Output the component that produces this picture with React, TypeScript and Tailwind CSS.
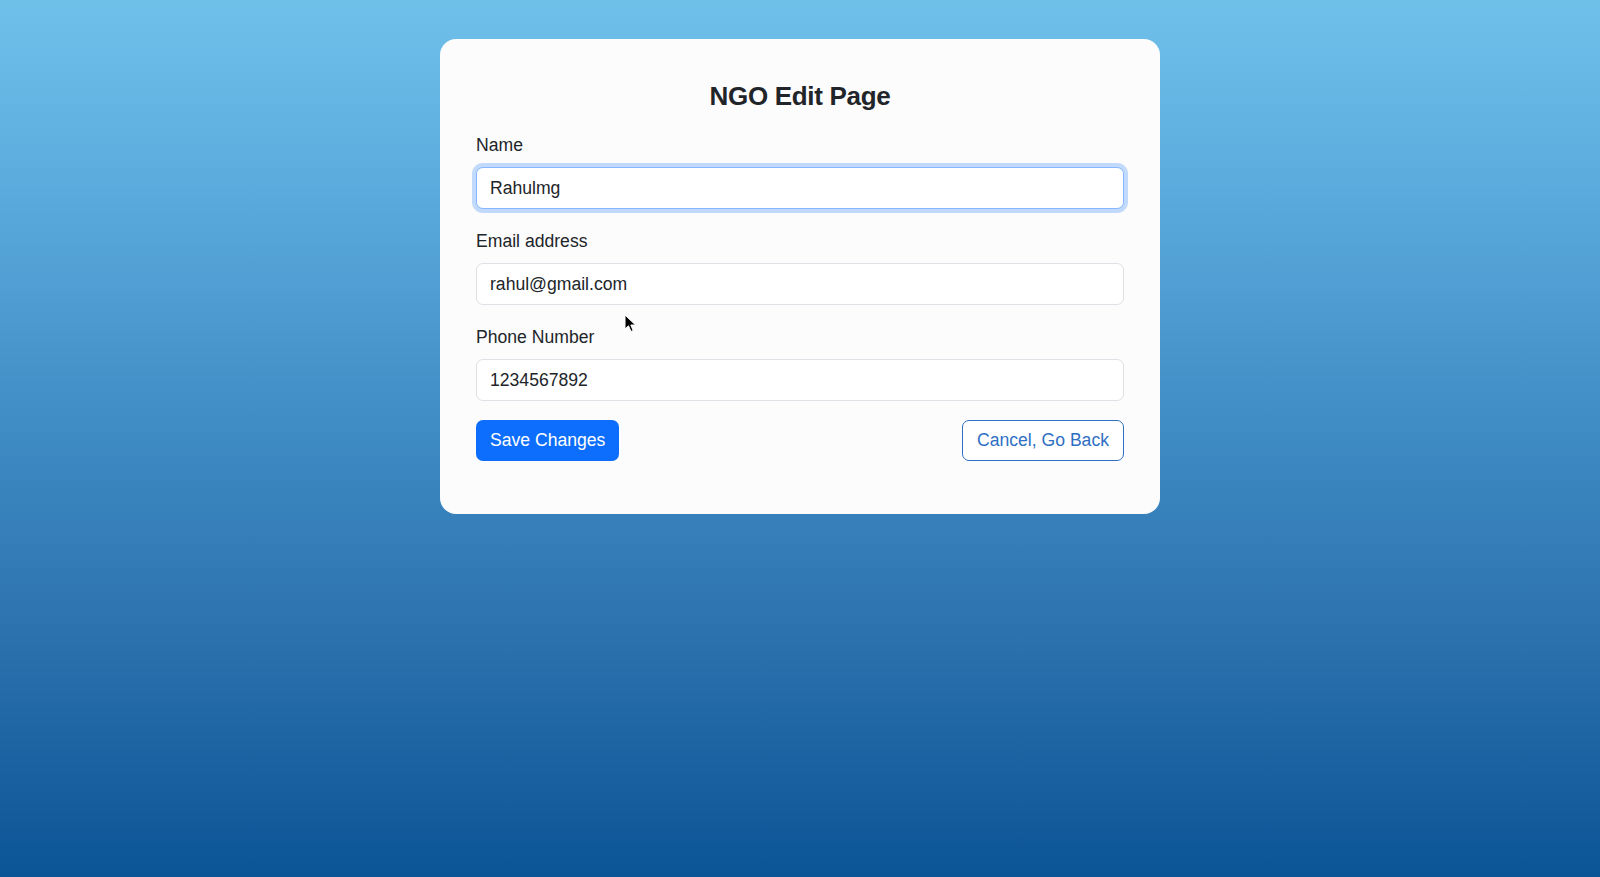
const font = { fontFamily: '"Liberation Sans", Arial, sans-serif' };

function Field({
  label,
  value,
  focused,
}: {
  label: string;
  value: string;
  focused?: boolean;
}) {
  return (
    <div className="flex flex-col mb-[19px]">
      <label className="text-[17.6px] leading-[26px] text-[#212529] mb-[9px]">
        {label}
      </label>
      <input
        readOnly
        value={value}
        className={
          focused
            ? "h-[42px] px-[13px] rounded-[7px] bg-white text-[17.6px] text-[#212529] border border-[#86b7fe] shadow-[0_0_0_4px_rgba(13,110,253,0.25)] outline-none"
            : "h-[42px] px-[13px] rounded-[7px] bg-white text-[17.6px] text-[#212529] border border-[#dee2e6] outline-none"
        }
        style={font}
      />
    </div>
  );
}

export default function App() {
  return (
    <div
      className="relative min-h-[877px] w-full flex justify-center items-start pt-[39px] bg-[linear-gradient(to_bottom,#6fc1ea_0%,#5aa9dc_23%,#3f8bc4_49%,#2a70ad_74%,#0b5495_100%)]"
      style={font}
    >
      <div className="w-[720px] bg-[#fcfcfd] rounded-[16px] px-[36px] pt-[41px] pb-[53px]">
        <h3 className="text-[26px] leading-[32px] font-bold text-center text-[#212529] tracking-[-0.3px] mb-[20px]">
          NGO Edit Page
        </h3>
        <Field label="Name" value="Rahulmg" focused />
        <Field label="Email address" value="rahul@gmail.com" />
        <Field label="Phone Number" value="1234567892" />
        <div className="flex justify-between items-center mt-px">
          <button className="h-[41px] px-[14px] rounded-[7px] bg-[#0d6efd] text-white text-[17.6px]">
            Save Changes
          </button>
          <button className="h-[41px] px-[14px] rounded-[7px] border border-[#2f6fc4] text-[#2f6fc4] text-[17.6px] bg-white">
            Cancel, Go Back
          </button>
        </div>
      </div>
      <svg
        className="absolute left-[624px] top-[314px]"
        width="13"
        height="19"
        viewBox="0 0 13 19"
      >
        <path
          d="M1 1 L1 15 L4.5 11.8 L7 17.5 L9.2 16.5 L6.8 11 L11.5 11 Z"
          fill="#000"
          stroke="#fff"
          strokeWidth="1"
        />
      </svg>
    </div>
  );
}
